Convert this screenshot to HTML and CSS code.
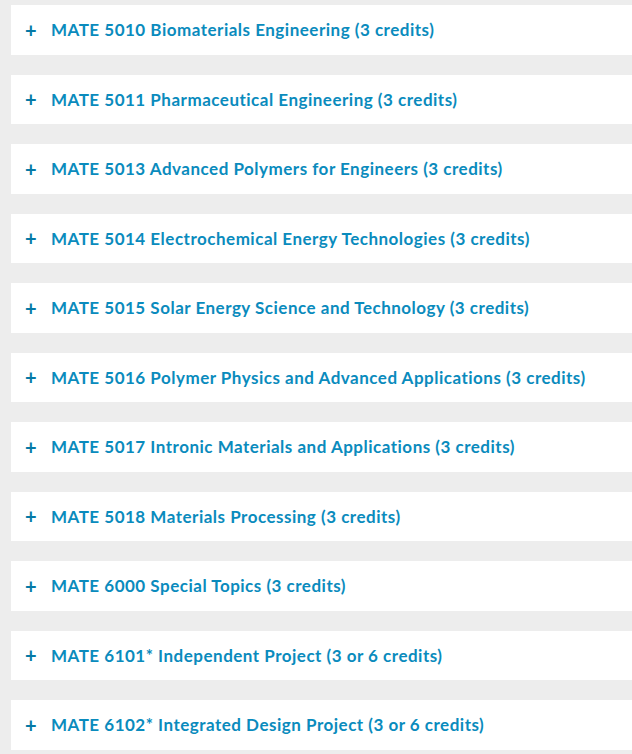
FILE: index.html
```html
<!DOCTYPE html>
<html lang="en">
<head>
<meta charset="utf-8">
<title>Courses</title>
<link rel="stylesheet" href="styles.css">
</head>
<body>
<div class="list">
  <div class="item"><span class="plus">+</span><span class="title">MATE 5010 Biomaterials Engineering (3 credits)</span></div>
  <div class="item"><span class="plus">+</span><span class="title">MATE 5011 Pharmaceutical Engineering (3 credits)</span></div>
  <div class="item"><span class="plus">+</span><span class="title">MATE 5013 Advanced Polymers for Engineers (3 credits)</span></div>
  <div class="item"><span class="plus">+</span><span class="title">MATE 5014 Electrochemical Energy Technologies (3 credits)</span></div>
  <div class="item"><span class="plus">+</span><span class="title">MATE 5015 Solar Energy Science and Technology (3 credits)</span></div>
  <div class="item"><span class="plus">+</span><span class="title">MATE 5016 Polymer Physics and Advanced Applications (3 credits)</span></div>
  <div class="item"><span class="plus">+</span><span class="title">MATE 5017 Intronic Materials and Applications (3 credits)</span></div>
  <div class="item"><span class="plus">+</span><span class="title">MATE 5018 Materials Processing (3 credits)</span></div>
  <div class="item"><span class="plus">+</span><span class="title">MATE 6000 Special Topics (3 credits)</span></div>
  <div class="item"><span class="plus">+</span><span class="title">MATE 6101* Independent Project (3 or 6 credits)</span></div>
  <div class="item"><span class="plus">+</span><span class="title">MATE 6102* Integrated Design Project (3 or 6 credits)</span></div>
</div>
</body>
</html>
```
FILE: styles.css
```css
html, body {
  margin: 0;
  padding: 0;
  background: #ededed;
}
body {
  font-family: Lato, "Open Sans", sans-serif;
}
.list {
  padding: 5px 0 0 11px;
  display: flex;
  flex-direction: column;
  gap: 20px;
}
.item {
  background: #ffffff;
  height: 49.5px;
  display: flex;
  align-items: center;
  color: #0a8bbd;
  font-size: 17px;
  font-weight: 700;
}
.plus {
  width: 40px;
  padding-left: 14px;
  box-sizing: border-box;
  color: #0579a6;
  font-size: 20px;
}
.title {
  white-space: nowrap;
  letter-spacing: 0.5px;
}
```
